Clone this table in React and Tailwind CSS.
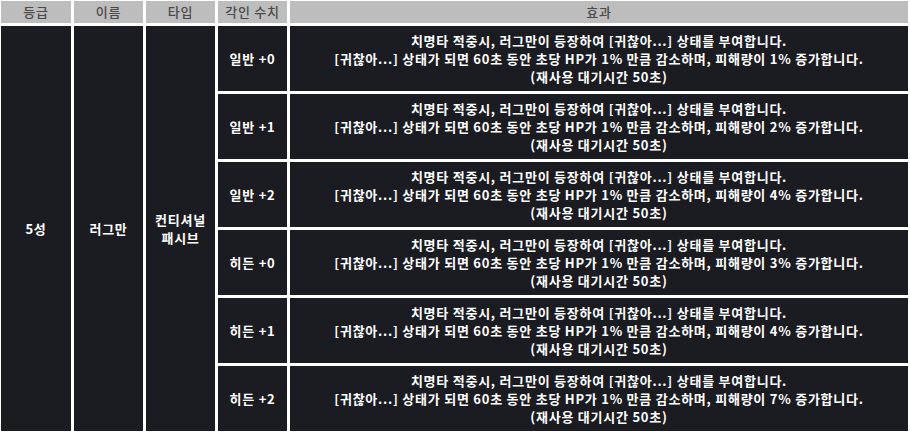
const rows = [
  { level: "일반 +0", pct: "1%" },
  { level: "일반 +1", pct: "2%" },
  { level: "일반 +2", pct: "4%" },
  { level: "히든 +0", pct: "3%" },
  { level: "히든 +1", pct: "4%" },
  { level: "히든 +2", pct: "7%" },
]

const font = { fontFamily: '"Malgun Gothic", "Noto Sans CJK KR", "Noto Sans", sans-serif' }

export default function App() {
  return (
    <div className="bg-white w-[910px] h-[432px] overflow-hidden pl-[1px] pt-[1px]" style={font}>
      <div className="grid grid-cols-[70px_69px_69px_69px_618px] grid-rows-[22px_repeat(6,65px)] gap-[3px] text-[13px] leading-[18px] tracking-[0.75px]">
        {["등급", "이름", "타입", "각인 수치", "효과"].map((h) => (
          <div key={h} className="bg-[#bdbdbd] text-[#4a4a4a] font-medium flex items-center justify-center">
            {h}
          </div>
        ))}

        <div className="row-span-6 bg-[#1b1c21] text-white font-semibold flex items-center justify-center">5성</div>
        <div className="row-span-6 bg-[#1b1c21] text-white font-semibold flex items-center justify-center">러그만</div>
        <div className="row-span-6 bg-[#1b1c21] text-white font-semibold flex items-center justify-center text-center">
          컨티셔널<br />패시브
        </div>

        {rows.map((r, i) => (
          <div key={i} className="contents">
            <div
              className="bg-[#1b1c21] text-white font-semibold flex items-center justify-center"
              style={{ gridColumn: 4, gridRow: i + 2 }}
            >
              {r.level}
            </div>
            <div
              className="bg-[#1b1c21] text-white font-semibold flex flex-col items-center justify-center text-center"
              style={{ gridColumn: 5, gridRow: i + 2 }}
            >
              <p>치명타 적중시, 러그만이 등장하여 [귀찮아...] 상태를 부여합니다.</p>
              <p>[귀찮아...] 상태가 되면 60초 동안 초당 HP가 1% 만큼 감소하며, 피해량이 {r.pct} 증가합니다.</p>
              <p>(재사용 대기시간 50초)</p>
            </div>
          </div>
        ))}
      </div>
    </div>
  )
}
